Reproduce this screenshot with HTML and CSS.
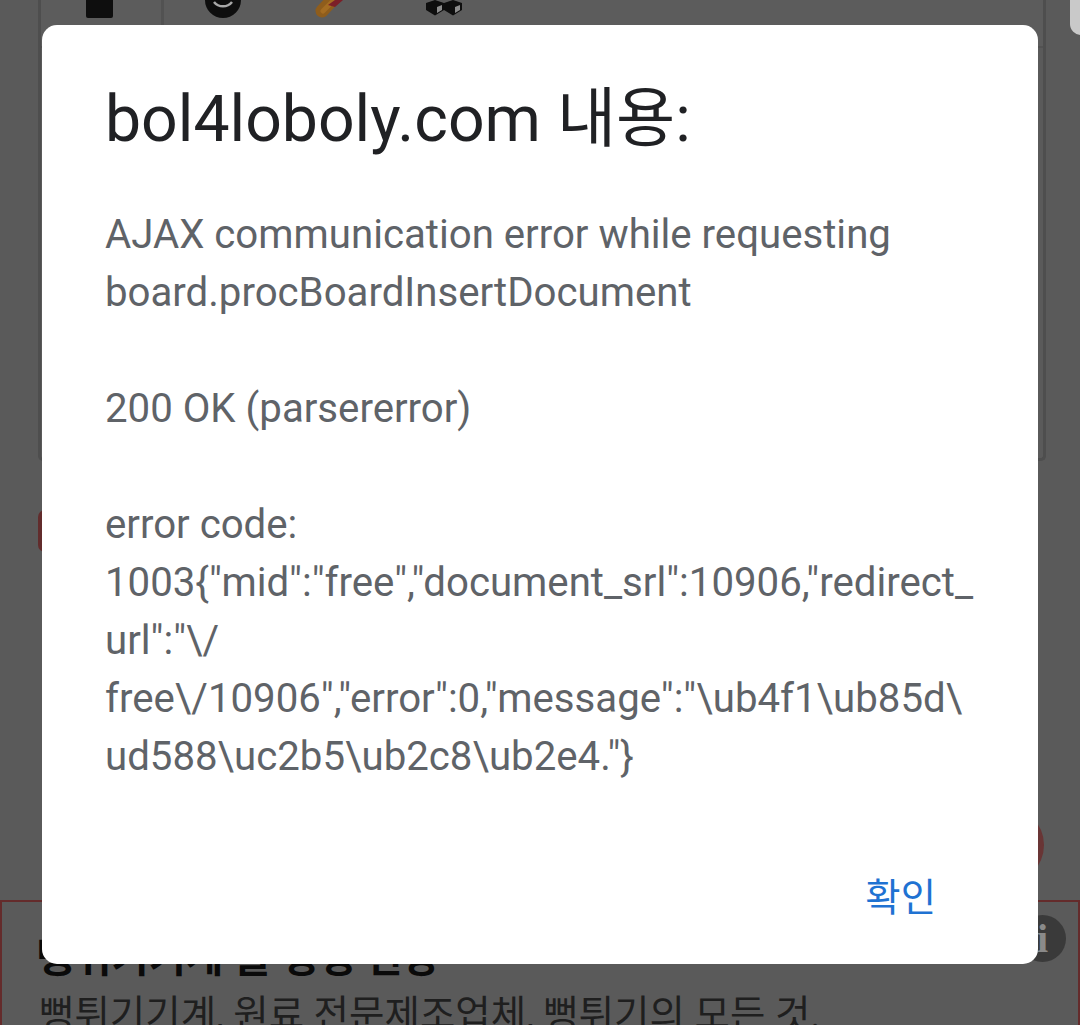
FILE: index.html
```html
<!DOCTYPE html>
<html lang="ko">
<head>
<meta charset="utf-8">
<title>bol4loboly.com</title>
<link rel="stylesheet" href="styles.css">
</head>
<body>
<div class="page">
  <div class="corner-tab"></div>
  <section class="editor">
    <div class="toolbar">
      <svg class="ico ico-square" viewBox="0 0 27 20"><rect width="27" height="20" rx="2" fill="#0e0e0e"/></svg>
      <span class="tool-sep"></span>
      <svg class="ico ico-smile" viewBox="0 0 36 18"><path d="M0 0a18 18 0 0 0 36 0z" fill="#0e0e0e"/><path d="M9 2a11.500 11.500 0 0 0 18 0" fill="none" stroke="#a8a8a8" stroke-width="2.500"/></svg>
      <svg class="ico ico-pen" viewBox="0 0 32 18"><path d="M8 11L21 -3" fill="none" stroke="#8f5d1c" stroke-width="13" stroke-linecap="round"/><path d="M9 11L20 0" fill="none" stroke="#a56d22" stroke-width="5" stroke-linecap="round"/><path d="M14 5l7-5h8l-8 7z" fill="#7c1f28"/></svg>
      <svg class="ico ico-cubes" viewBox="0 0 38 16"><path d="M1 3l9-3 9 3 9-3 9 3v7l-9 5.500-9-5.500-9 5.500-9-5.500z" fill="#0e0e0e"/><path d="M12 7l5-2v5l-5 3zM30 7l5-2v5l-5 3z" fill="#8c8c8c"/></svg>
    </div>
  </section>
  <div class="red-row"><span class="red-btn"></span></div>
  <div class="circle-row"><span class="red-circle"></span></div>
  <aside class="ad">
    <h2 class="ad-title">뻥튀기기계 쌀 생생 현장</h2>
    <p class="ad-text">뻥튀기기계, 원료 전문제조업체, 뻥튀기의 모든 것.</p>
    <span class="ad-info">i</span>
  </aside>
  <div class="dialog" role="alertdialog">
    <h1 class="dialog-title">bol4loboly.com 내용:</h1>
    <div class="dialog-body">
      <p>AJAX communication error while requesting<br>board.procBoardInsertDocument</p>
      <p>200 OK (parsererror)</p>
      <p>error code:<br>1003{"mid":"free","document_srl":10906,"redirect_<br>url":"\/<br>free\/10906","error":0,"message":"\ub4f1\ub85d\<br>ud588\uc2b5\ub2c8\ub2e4."}</p>
    </div>
    <div class="dialog-actions"><button class="dialog-ok" type="button">확인</button></div>
  </div>
</div>
</body>
</html>
```
FILE: styles.css
```css
* { box-sizing: border-box; }
html, body { margin: 0; padding: 0; }
body {
  width: 1080px;
  height: 1025px;
  overflow: hidden;
  background: #5a5a5a;
  font-family: Roboto, "Noto Sans CJK KR", sans-serif;
}
.page {
  position: relative;
  width: 1080px;
  height: 1025px;
  overflow: hidden;
  display: flex;
  flex-direction: column;
}
.corner-tab {
  position: absolute;
  top: -10px;
  right: -10px;
  width: 20px;
  height: 45px;
  border-radius: 0 0 0 11px;
  background: #c9c9c9;
}
.editor {
  margin-left: 38px;
  width: 1008px;
  height: 461px;
  flex: none;
  border: 3px solid #4e4e4e;
  border-top: 0;
  border-radius: 0 0 5px 5px;
}
.toolbar {
  height: 48px;
  border-bottom: 2px solid #525252;
  display: flex;
  align-items: flex-start;
  padding-left: 45px;
  background: #5c5c5c;
}
.ico { display: block; flex: none; }
.ico-square { width: 27px; height: 20px; margin-top: -2px; }
.tool-sep {
  width: 3px;
  height: 46px;
  margin-left: 48px;
  background: #525252;
  flex: none;
}
.ico-smile { width: 36px; height: 18px; margin-left: 41px; }
.ico-pen { width: 32px; height: 18px; margin-left: 73px; }
.ico-cubes { width: 38px; height: 16px; margin-left: 79px; }
.red-row { margin-top: 49px; padding-left: 38px; height: 42px; flex: none; }
.red-btn {
  display: block;
  width: 80px;
  height: 42px;
  border-radius: 7px;
  background: #622c2c;
}
.circle-row {
  margin-top: 254px;
  height: 94px;
  flex: none;
  padding-right: 36px;
  display: flex;
  justify-content: flex-end;
}
.red-circle {
  width: 78px;
  height: 78px;
  border-radius: 50%;
  background: #693535;
}
.ad {
  position: relative;
  flex: none;
  height: 140px;
  border: 2px solid #642b2b;
  padding: 34px 0 0 37px;
}
.ad-title {
  margin: 0 0 0 -2px;
  font-size: 40.500px;
  font-weight: 700;
  line-height: 44px;
  color: #0a0a0a;
}
.ad-text {
  margin: 13px 0 0;
  font-size: 38.500px;
  line-height: 44px;
  color: #1f1f1f;
}
.ad-info {
  position: absolute;
  top: 13px;
  right: 12px;
  width: 47px;
  height: 47px;
  border-radius: 50%;
  background: #3a3a3a;
  color: #8a8a8a;
  font: 700 40px/47px "Liberation Serif", serif;
  text-align: center;
}
.dialog {
  position: absolute;
  left: 42px;
  top: 25px;
  width: 996px;
  height: 939px;
  padding: 58px 63px 0;
  background: #fff;
  border-radius: 15px;
  display: flex;
  flex-direction: column;
}
.dialog-title {
  margin: 0;
  font-size: 64.300px;
  font-weight: 400;
  line-height: 72px;
  color: #202124;
}
.dialog-body {
  margin-top: 51px;
  font-size: 40.200px;
  line-height: 58px;
  color: #5f6368;
  white-space: nowrap;
}
.dialog-body p { margin: 0 0 58px; }
.dialog-actions {
  margin-top: auto;
  display: flex;
  justify-content: flex-end;
  padding: 0 39px 41px 0;
}
.dialog-ok {
  padding: 0;
  border: 0;
  background: none;
  font: 400 38.400px/50px Roboto, "Noto Sans CJK KR", sans-serif;
  color: #1f72d2;
}
```
